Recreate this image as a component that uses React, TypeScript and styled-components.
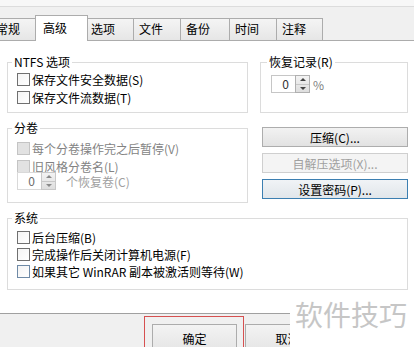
import React from "react";
import styled, { createGlobalStyle, css } from "styled-components";

const GlobalStyle = createGlobalStyle`
  html, body {
    margin: 0;
    padding: 0;
  }
  body {
    font-family: "Noto Sans CJK SC", "Noto Sans", sans-serif;
    font-size: 12px;
    color: #000;
  }
  * {
    box-sizing: border-box;
  }
`;

const Window = styled.div`
  position: relative;
  width: 414px;
  height: 347px;
  overflow: hidden;
  background: #f0f0f0;
`;

const TopStrip = styled.div`
  height: 7px;
  background: #f7f7f7;
  border-bottom: 1px solid #dcdcdc;
`;

const TabRow = styled.div`
  display: flex;
  align-items: flex-end;
  height: 25px;
  margin: 8px 0 0 -10px;
`;

const Tab = styled.div<{ $w: number; $active?: boolean }>`
  position: relative;
  flex: none;
  width: ${({ $w }) => $w}px;
  height: 22px;
  margin-right: -1px;
  padding-left: 5px;
  line-height: 20px;
  border: 1px solid #acacac;
  border-bottom: none;
  background: linear-gradient(#f4f4f4, #e6e6e6);
  white-space: nowrap;
  ${({ $active, $w }) =>
    $active &&
    css`
      z-index: 1;
      width: ${$w + 4}px;
      height: 26px;
      margin: 0 -3px -1px -2px;
      padding-left: 7px;
      line-height: 23px;
      background: #fff;
    `}
`;

const Panel = styled.div`
  height: 274px;
  margin: 0 -3px;
  padding: 14px 0 0 9px;
  background: #fff;
  border: 1px solid #acacac;
  border-bottom-color: #a0a0a0;
`;

const Grid = styled.div`
  display: grid;
  grid-template-columns: 241px 148px;
  column-gap: 12px;
  row-gap: 8px;
  align-items: start;
`;

const Group = styled.fieldset<{ $pt: number; $pb: number; $pl?: number; $span?: boolean }>`
  margin: 0;
  min-width: 0;
  padding: ${({ $pt, $pb, $pl }) => `${$pt}px 0 ${$pb}px ${$pl ?? 9}px`};
  border: 1px solid #dcdcdc;
  ${({ $span }) => $span && "grid-column: 1 / -1;"}
`;

const Legend = styled.legend`
  margin-left: -5px;
  padding: 0 2px;
  line-height: 14px;
  white-space: nowrap;
`;

const CheckRow = styled.div<{ $h: number; $disabled?: boolean }>`
  display: flex;
  align-items: center;
  height: ${({ $h }) => $h}px;
  color: ${({ $disabled }) => ($disabled ? "#838383" : "#000")};
  white-space: nowrap;
`;

const Box = styled.span<{ $disabled?: boolean; $focus?: boolean }>`
  flex: none;
  width: 13px;
  height: 13px;
  margin-right: 2px;
  border: 1px solid
    ${({ $disabled, $focus }) => ($disabled ? "#c4c4c4" : $focus ? "#6f8aa6" : "#707070")};
  background: ${({ $disabled }) =>
    $disabled ? "#e2e2e2" : "linear-gradient(135deg, #f4f4f4, #ffffff)"};
`;

const SpinRow = styled.div<{ $disabled?: boolean; $mt?: number }>`
  display: flex;
  align-items: center;
  margin-top: ${({ $mt }) => $mt ?? 0}px;
  color: ${({ $disabled }) => ($disabled ? "#a0a0a0" : "#808080")};
  white-space: nowrap;
`;

const Spinner = styled.div`
  display: flex;
  flex: none;
  width: 39px;
  height: 18px;
`;

const SpinInput = styled.div<{ $disabled?: boolean }>`
  flex: 1;
  padding-right: 6px;
  border: 1px solid ${({ $disabled }) => ($disabled ? "#d9d9d9" : "#c6c6c6")};
  border-right: none;
  background: #fff;
  color: ${({ $disabled }) => ($disabled ? "#6d6d6d" : "#333")};
  text-align: right;
  line-height: 16px;
`;

const SpinButtons = styled.div<{ $disabled?: boolean }>`
  display: flex;
  flex-direction: column;
  width: 15px;
  border: 1px solid ${({ $disabled }) => ($disabled ? "#c8c8c8" : "#b0b0b0")};
  background: linear-gradient(#f3f3f3, #dedede);
`;

const Arrow = styled.span<{ $down?: boolean; $disabled?: boolean }>`
  display: flex;
  flex: 1;
  align-items: center;
  justify-content: center;
  ${({ $down }) => $down && "border-top: 1px solid #c8c8c8;"}
  &::before {
    content: "";
    border-left: 3px solid transparent;
    border-right: 3px solid transparent;
    ${({ $down, $disabled }) =>
      $down
        ? `border-top: 3px solid ${$disabled ? "#8a8a8a" : "#444"};`
        : `border-bottom: 3px solid ${$disabled ? "#8a8a8a" : "#444"};`}
  }
`;

const SpinLabel = styled.span<{ $ml: number }>`
  margin-left: ${({ $ml }) => $ml}px;
`;

const ButtonColumn = styled.div`
  display: flex;
  flex-direction: column;
  gap: 6px;
  margin-top: 6px;
`;

const ActionButton = styled.div<{ $variant?: "disabled" | "focus" }>`
  display: flex;
  align-items: center;
  justify-content: center;
  height: 20px;
  margin-left: 2px;
  border: 1px solid #adadad;
  background: linear-gradient(#f2f2f2, #e2e2e2);
  white-space: nowrap;
  ${({ $variant }) =>
    $variant === "disabled" &&
    css`
      border-color: #cfcfcf;
      background: #f4f4f4;
      color: #a0a0a0;
    `}
  ${({ $variant }) =>
    $variant === "focus" &&
    css`
      border-color: #3c7fb1;
      background: linear-gradient(#f0f3f6, #e1e6ea);
    `}
`;

const Footer = styled.div`
  display: flex;
  align-items: flex-start;
  padding: 2px 0 0 144px;
`;

const Highlight = styled.div`
  flex: none;
  height: 40px;
  padding: 7px 6px 0 7px;
  border: 1px solid #d65050;
`;

const DialogButton = styled.div<{ $mt?: number }>`
  flex: none;
  width: 85px;
  height: 30px;
  margin-top: ${({ $mt }) => $mt ?? 0}px;
  border: 1px solid #acacac;
  background: linear-gradient(#f3f3f3, #e4e4e4);
  text-align: center;
  line-height: 28px;
`;

const CancelButton = styled(DialogButton)`
  margin-left: 1px;
`;

const Watermark = styled.div`
  position: absolute;
  left: 290px;
  top: 291px;
  right: 0;
  bottom: 0;
  padding: 3px 0 0 5px;
  background: #fff;
  color: #c6c6c6;
  font-size: 28px;
  line-height: 40px;
  white-space: nowrap;
`;

const tabs = [
  { label: "常规", w: 48 },
  { label: "高级", w: 49, active: true },
  { label: "选项", w: 49 },
  { label: "文件", w: 48 },
  { label: "备份", w: 50 },
  { label: "时间", w: 48 },
  { label: "注释", w: 47 },
];

const SpinBox: React.FC<{ disabled?: boolean }> = ({ disabled }) => (
  <Spinner>
    <SpinInput $disabled={disabled}>0</SpinInput>
    <SpinButtons $disabled={disabled}>
      <Arrow $disabled={disabled} />
      <Arrow $down $disabled={disabled} />
    </SpinButtons>
  </Spinner>
);

const Check: React.FC<{ label: string; h: number; disabled?: boolean; focus?: boolean }> = ({
  label,
  h,
  disabled,
  focus,
}) => (
  <CheckRow $h={h} $disabled={disabled}>
    <Box $disabled={disabled} $focus={focus} />
    {label}
  </CheckRow>
);

const App: React.FC = () => {
  return (
    <Window>
      <GlobalStyle />
      <TopStrip />
      <TabRow>
        {tabs.map((t) => (
          <Tab key={t.label} $w={t.w} $active={t.active}>
            {t.label}
          </Tab>
        ))}
      </TabRow>
      <Panel>
        <Grid>
          <Group $pt={1} $pb={6}>
            <Legend>NTFS 选项</Legend>
            <Check h={18} label="保存文件安全数据(S)" />
            <Check h={18} label="保存文件流数据(T)" />
          </Group>
          <Group $pt={6} $pb={19} $pl={10}>
            <Legend style={{ marginLeft: -4 }}>恢复记录(R)</Legend>
            <SpinRow>
              <SpinBox />
              <SpinLabel $ml={3}>%</SpinLabel>
            </SpinRow>
          </Group>
          <Group $pt={4} $pb={12}>
            <Legend>分卷</Legend>
            <Check h={18} disabled label="每个分卷操作完之后暂停(V)" />
            <Check h={18} disabled label="旧风格分卷名(L)" />
            <SpinRow $disabled $mt={-3}>
              <SpinBox disabled />
              <SpinLabel $ml={10}>个恢复卷(C)</SpinLabel>
            </SpinRow>
          </Group>
          <ButtonColumn>
            <ActionButton>压缩(C)...</ActionButton>
            <ActionButton $variant="disabled">自解压选项(X)...</ActionButton>
            <ActionButton $variant="focus">设置密码(P)...</ActionButton>
          </ButtonColumn>
          <Group $pt={4} $pb={9} $span>
            <Legend>系统</Legend>
            <Check h={17} label="后台压缩(B)" />
            <Check h={17} label="完成操作后关闭计算机电源(F)" />
            <Check h={17} focus label="如果其它 WinRAR 副本被激活则等待(W)" />
          </Group>
        </Grid>
      </Panel>
      <Footer>
        <Highlight>
          <DialogButton>确定</DialogButton>
        </Highlight>
        <CancelButton $mt={8}>取消</CancelButton>
      </Footer>
      <Watermark>软件技巧</Watermark>
    </Window>
  );
};

export default App;
